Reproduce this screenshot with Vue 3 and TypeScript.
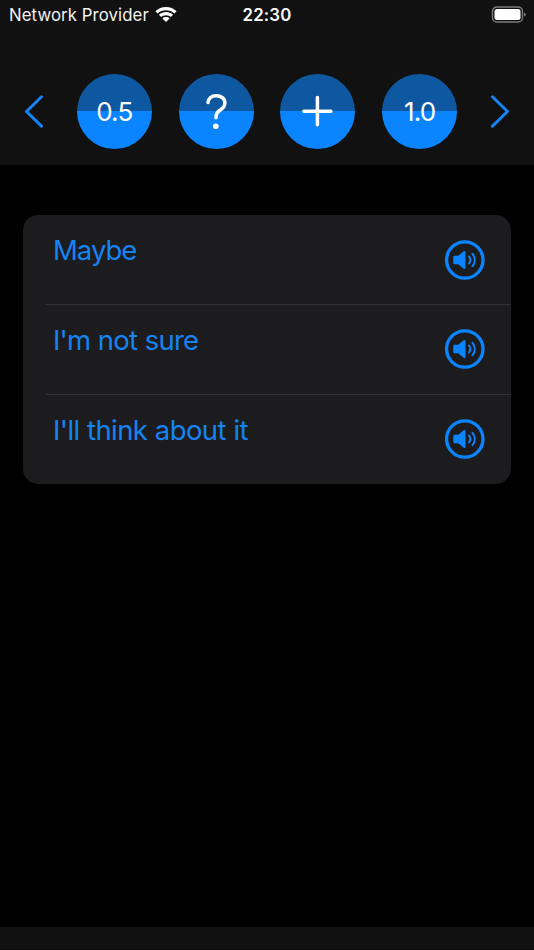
<script setup lang="ts">
interface Phrase {
  id: number
  text: string
  kind: string
}

const phrases: Phrase[] = [
  { id: 1, text: 'Maybe', kind: 'maybe' },
  { id: 2, text: "I'm not sure", kind: 'unsure' },
  { id: 3, text: "I'll think about it", kind: 'think' },
]
</script>

<template>
  <div class="screen">
    <header class="top">
      <div class="status">
        <div class="carrier">
          <span class="carrier-name">Network Provider</span>
          <svg class="wifi" width="22" height="16" viewBox="0 0 22 16" fill="#fff">
            <path d="M11 0C6.900 0 3.200 1.600.4 4.200L2.700 6.500C4.900 4.500 7.800 3.300 11 3.300s6.100 1.200 8.300 3.200l2.300-2.300C18.800 1.600 15.100 0 11 0Z" />
            <path d="M11 5.100c-2.700 0-5.200 1-7.100 2.700l2.300 2.300C7.500 9 9.200 8.300 11 8.300s3.500.7 4.800 1.800l2.300-2.300C16.200 6.100 13.700 5.100 11 5.100Z" />
            <path d="M11 10.100c-1.400 0-2.600.5-3.600 1.300L11 15l3.600-3.600c-1-.8-2.200-1.300-3.600-1.300Z" />
          </svg>
        </div>
        <time class="clock">22:30</time>
        <div class="power">
          <svg width="36" height="18" viewBox="0 0 36 18">
            <rect x="1.500" y="1" width="30" height="15" rx="4.300" fill="none" stroke="#7b7b7b" stroke-width="1.400" />
            <rect x="3.500" y="3" width="26" height="11" rx="2.500" fill="#fff" />
            <path d="M33 6.400c1.400.5 1.700 1.200 1.700 2.100s-.3 1.600-1.700 2.100Z" fill="#7b7b7b" />
          </svg>
        </div>
      </div>

      <nav class="controls">
        <button class="arrow" aria-label="Previous">
          <svg width="20" height="34" viewBox="0 0 20 34"><path d="M17.500 1.800 2.500 16.500l15 14.600" /></svg>
        </button>
        <div class="rounds">
          <button class="round"><span class="rate half">0.5</span></button>
          <button class="round" aria-label="Help">
            <svg width="75" height="75" viewBox="0 0 75 75">
              <path class="glyph" d="M29 28.500C29.400 24.400 32.500 21.700 37.200 21.700c4.900 0 8.700 2.900 8.700 7.200 0 3.200-1.600 5-4.700 7.100-3.200 2.200-4.200 3.800-4.200 6.700v1" />
              <circle cx="36.800" cy="52.200" r="2.800" fill="#fff" />
            </svg>
          </button>
          <button class="round" aria-label="Add">
            <svg width="75" height="75" viewBox="0 0 75 75">
              <path class="glyph" d="M37.400 23.600v27.200M23.900 37.200h27" />
            </svg>
          </button>
          <button class="round"><span class="rate full">1.0</span></button>
        </div>
        <button class="arrow" aria-label="Next">
          <svg width="20" height="34" viewBox="0 0 20 34"><path d="M2.500 1.800l15 14.700-15 14.600" /></svg>
        </button>
      </nav>
    </header>

    <main class="content">
      <ul class="list">
        <li v-for="phrase in phrases" :key="phrase.id" class="row">
          <span class="phrase" :class="phrase.kind">{{ phrase.text }}</span>
          <button class="speak" :aria-label="phrase.text">
            <svg width="40" height="40" viewBox="0 0 40 40">
              <circle cx="19.800" cy="20" r="18.200" fill="none" stroke="#0a84ff" stroke-width="3.300" />
              <path d="M9.700 15.700h3.500l5.600-4.400c.9-.6 1.700-.3 1.700.7v16c0 1-.8 1.300-1.700.7l-5.600-4.400H9.700c-.8 0-1.400-.6-1.400-1.400v-5.800c0-.8.600-1.400 1.400-1.400Z" fill="#0a84ff" />
              <path class="wave" d="M24 16.500c1.600 2 1.600 5 0 7M27.500 13.900c3 3.700 3 8.500 0 12.200" />
            </svg>
          </button>
        </li>
      </ul>
    </main>
    <footer class="bottom"></footer>
  </div>
</template>

<style>
body {
  background: #000;
}
</style>

<style scoped>
.screen {
  display: flex;
  flex-direction: column;
  height: 950px;
  background: #000;
  color: #fff;
  font-family: Inter, "Liberation Sans", sans-serif;
}
button {
  display: flex;
  align-items: center;
  justify-content: center;
  padding: 0;
  border: 0;
  background: none;
  color: inherit;
  font: inherit;
}
svg {
  display: block;
}
.top {
  box-sizing: border-box;
  height: 165px;
  background: #111;
}
.status {
  display: grid;
  grid-template-columns: 1fr auto 1fr;
  align-items: center;
  height: 30px;
  padding: 0 7px 0 9px;
}
.carrier {
  display: flex;
  align-items: center;
  color: #f2f2f2;
}
.carrier-name {
  width: 146px;
  font-size: 16.800px;
  letter-spacing: 0.080px;
  white-space: nowrap;
}
.clock {
  margin-right: 2px;
  font-size: 16.800px;
  font-weight: 600;
  letter-spacing: 0.2px;
}
.power {
  display: flex;
  justify-content: flex-end;
}
.controls {
  display: flex;
  align-items: center;
  justify-content: space-between;
  margin-top: 44px;
  padding: 0 24px;
}
.rounds {
  display: flex;
  gap: 26.800px;
}
.arrow path {
  fill: none;
  stroke: #1484f5;
  stroke-width: 3;
  stroke-linecap: round;
  stroke-linejoin: round;
}
.round {
  width: 75px;
  height: 75px;
  border-radius: 50%;
  background: linear-gradient(#0e58a2 0 50%, #0a84ff 50%);
}
.glyph {
  fill: none;
  stroke: #fff;
  stroke-width: 3.500;
  stroke-linecap: round;
  stroke-linejoin: round;
}
.rate {
  font-size: 26px;
  letter-spacing: -0.800px;
}
.content {
  flex: 1;
  padding: 50px 23px 0;
}
.list {
  margin: 0;
  padding: 0 0 0 23px;
  border-radius: 15px;
  background: #1c1c1e;
  list-style: none;
}
.row {
  display: flex;
  justify-content: space-between;
  box-sizing: border-box;
  height: 89px;
  padding: 0 26px 0 7px;
}
.row + .row {
  height: 90px;
  box-shadow: inset 0 1px #323234;
}
.phrase {
  padding-top: 18px;
  color: #1683f3;
  font-size: 27.500px;
  line-height: 34px;
  white-space: nowrap;
}
.row + .row .phrase {
  padding-top: 19px;
}
.maybe {
  letter-spacing: -1px;
}
.unsure {
  letter-spacing: -0.800px;
  word-spacing: 0.6px;
}
.think {
  letter-spacing: -0.620px;
  word-spacing: 0.5px;
}
.speak {
  align-self: flex-start;
  margin-top: 25px;
}
.wave {
  fill: none;
  stroke: #0a84ff;
  stroke-width: 2;
  stroke-linecap: round;
}
.bottom {
  box-sizing: border-box;
  height: 23px;
  border-bottom: 1px solid #0b0b0b;
  background: #111;
}
</style>
